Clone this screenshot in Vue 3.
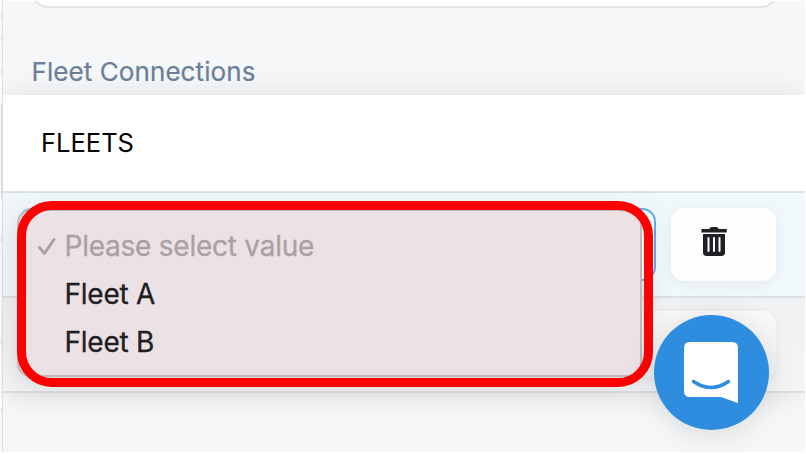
<script setup>
const options = [
  { label: 'Please select value', selected: true },
  { label: 'Fleet A', selected: false },
  { label: 'Fleet B', selected: false },
]
const ticks = [13, 35, 69, 236, 339, 408]
</script>

<template>
  <main class="screen">
    <aside class="edge">
      <i v-for="y in ticks" :key="y" class="tick" :style="{ top: y + 'px' }"></i>
    </aside>
    <section class="panel">
      <div class="field"></div>
      <h2 class="title">Fleet Connections</h2>
      <div class="table">
        <header class="head"><span class="head-label">FLEETS</span></header>
        <div class="row active">
          <div class="select focused"><i class="caret"></i></div>
          <button class="remove" aria-label="Remove">
            <svg width="26" height="30" viewBox="0 0 26 30">
              <path fill="#202124" d="M.5 2H8L9.5.4q.5-.4 1.200-.4h4.600q.7 0 1.200.4L18 2h7.800V5.500H.5zM2 7h22V25.500q0 3.500-3.500 3.500h-15Q2 29 2 25.500z" />
              <path stroke="#fff" stroke-width="2" stroke-linecap="round" d="M7.500 11v13M13 11v13M18.500 11v13" />
            </svg>
          </button>
        </div>
        <div class="row next">
          <div class="select plain"></div>
        </div>
      </div>
    </section>
    <ul class="menu">
      <li v-for="o in options" :key="o.label" :class="{ chosen: o.selected }">
        <svg v-if="o.selected" class="check" width="20" height="20" viewBox="0 0 20 20">
          <path fill="none" stroke="#aaa1a5" stroke-width="3" stroke-linecap="round" stroke-linejoin="round" d="M2.500 11.500l5 6L17 3.500" />
        </svg>
        <span class="option">{{ o.label }}</span>
      </li>
    </ul>
    <div class="frame"></div>
    <button class="chat" aria-label="Chat">
      <svg width="54" height="62" viewBox="0 0 54 62">
        <path fill="#fff" d="M6 0h42q6 0 6 6v55L37 55H6q-6 0-6-6V6q0-6 6-6z" />
        <path fill="none" stroke="#2e8ddf" stroke-width="3.500" stroke-linecap="round" d="M9.500 39.500q17.500 12 35 0" />
      </svg>
    </button>
  </main>
</template>

<style>
body { margin: 0; background: #fff; }
</style>

<style scoped>
.screen {
  position: relative;
  display: flex;
  width: 806px;
  height: 454px;
  overflow: hidden;
  background: #fff;
  font-family: Inter, "Liberation Sans", sans-serif;
}
button { border: 0; padding: 0; }
.edge {
  position: relative;
  box-sizing: border-box;
  width: 3px;
  height: 452px;
  background: #fafafa;
  border-right: 1px solid #dfe2e4;
}
.edge::after {
  content: "";
  position: absolute;
  top: 104px;
  left: 1px;
  width: 2px;
  height: 94px;
  background: #d5dcde;
}
.tick { position: absolute; left: 1px; width: 2px; height: 6px; background: #dde0e3; }
.panel {
  display: flex;
  flex-direction: column;
  width: 802px;
  height: 451px;
  margin-top: 1px;
  overflow: hidden;
  background: #f5f7f9;
}
.field {
  box-sizing: border-box;
  flex: none;
  width: 745px;
  height: 27px;
  margin: -20px 0 0 29px;
  background: #fff;
  border: 2px solid #e1e2e4;
  border-top: 0;
  border-radius: 0 0 16px 16px;
}
.title {
  flex: none;
  height: 34px;
  margin: 47px 0 6px 28.500px;
  color: #6b7f9b;
  font-size: 26px;
  font-weight: 400;
  letter-spacing: .08px;
  line-height: 33px;
  white-space: nowrap;
  -webkit-text-stroke: .2px #6b7f9b;
}
.table { flex: none; box-shadow: 0 0 28px rgba(0, 0, 0, .09); background: #f5f6f8; }
.head {
  display: flex;
  align-items: center;
  box-sizing: border-box;
  height: 98px;
  padding: 0 0 2px 38px;
  background: #fff;
  border-bottom: 2px solid #dfe2e4;
}
.head-label { font-size: 25.500px; font-weight: 400; color: #000; }
.row { display: flex; box-sizing: border-box; border-bottom: 2px solid #dcdfe1; padding-left: 15px; }
.active { height: 105px; padding-top: 15px; background: #f1f8fb; }
.select { box-sizing: border-box; width: 638px; height: 73px; background: #fff; border-radius: 14px; }
.focused { display: flex; align-items: center; justify-content: flex-end; border: 2px solid #62aeee; border-left-color: #c0b9bc; }
.caret { width: 2px; height: 2px; margin: 0 12px 7px 0; background: #777; }
.remove {
  display: flex;
  box-sizing: border-box;
  width: 105px;
  height: 73px;
  margin-left: 15px;
  padding: 19px 0 0 30px;
  background: #fefefe;
  border-radius: 14px;
  box-shadow: 0 2px 14px rgba(0, 0, 0, .06);
}
.next { height: 95px; padding-top: 13px; background: linear-gradient(#eff1f2, #f4f5f7); }
.plain { width: 758px; height: 67px; background: linear-gradient(#f9f9f9, #f1f2f3); box-shadow: 0 1px 8px rgba(0, 0, 0, .05); }
.menu {
  position: absolute;
  top: 209px;
  left: 17px;
  box-sizing: border-box;
  width: 625px;
  height: 168px;
  margin: 0;
  padding: 11px 0 0 17px;
  list-style: none;
  background: #ece2e6;
  border: 2px solid #c0b9bc;
  border-radius: 14px 4px 4px 14px;
  box-shadow: 0 8px 34px rgba(0, 0, 0, .13);
}
.menu li {
  display: flex;
  align-items: center;
  height: 48px;
  padding-left: 28.500px;
  color: #202022;
  font-size: 28px;
  letter-spacing: -.24px;
  white-space: nowrap;
  -webkit-text-stroke: .3px currentColor;
}
.menu .chosen { padding-left: .5px; color: #aaa1a5; }
.check { width: 20px; margin-right: 8px; }
.frame {
  position: absolute;
  top: 201px;
  left: 17px;
  box-sizing: border-box;
  width: 636px;
  height: 186px;
  border: 9px solid #f00;
  border-radius: 35px;
}
.chat {
  position: absolute;
  top: 315px;
  left: 654px;
  display: flex;
  width: 115px;
  height: 115px;
  padding: 27px 0 0 30px;
  box-sizing: border-box;
  background: #2e8ddf;
  border-radius: 50%;
  box-shadow: 0 4px 30px rgba(0, 0, 0, .12);
}
</style>
